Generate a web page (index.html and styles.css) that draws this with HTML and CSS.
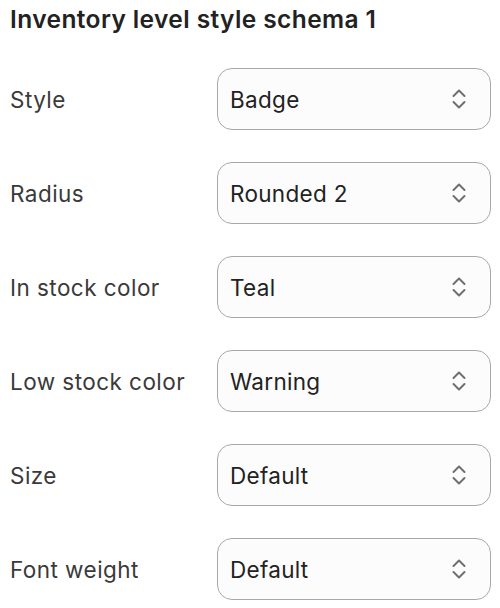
FILE: index.html
```html
<!DOCTYPE html>
<html>
<head>
<meta charset="utf-8">
<link rel="stylesheet" href="styles.css">
</head>
<body>
<div class="panel">
  <h1 class="title">Inventory level style schema 1</h1>
  <div class="rows">
    <div class="row"><span class="label">Style</span><div class="select"><span>Badge</span><svg class="chev" viewBox="0 0 14 24" width="14" height="24"><path d="M1.5 9 L7 3.5 L12.5 9 M1.5 15 L7 20.5 L12.5 15" fill="none" stroke="#6f6f6f" stroke-width="2" stroke-linecap="round" stroke-linejoin="round"/></svg></div></div>
    <div class="row"><span class="label">Radius</span><div class="select"><span>Rounded 2</span><svg class="chev" viewBox="0 0 14 24" width="14" height="24"><path d="M1.5 9 L7 3.5 L12.5 9 M1.5 15 L7 20.5 L12.5 15" fill="none" stroke="#6f6f6f" stroke-width="2" stroke-linecap="round" stroke-linejoin="round"/></svg></div></div>
    <div class="row"><span class="label">In stock color</span><div class="select"><span>Teal</span><svg class="chev" viewBox="0 0 14 24" width="14" height="24"><path d="M1.5 9 L7 3.5 L12.5 9 M1.5 15 L7 20.5 L12.5 15" fill="none" stroke="#6f6f6f" stroke-width="2" stroke-linecap="round" stroke-linejoin="round"/></svg></div></div>
    <div class="row"><span class="label">Low stock color</span><div class="select"><span>Warning</span><svg class="chev" viewBox="0 0 14 24" width="14" height="24"><path d="M1.5 9 L7 3.5 L12.5 9 M1.5 15 L7 20.5 L12.5 15" fill="none" stroke="#6f6f6f" stroke-width="2" stroke-linecap="round" stroke-linejoin="round"/></svg></div></div>
    <div class="row"><span class="label">Size</span><div class="select"><span>Default</span><svg class="chev" viewBox="0 0 14 24" width="14" height="24"><path d="M1.5 9 L7 3.5 L12.5 9 M1.5 15 L7 20.5 L12.5 15" fill="none" stroke="#6f6f6f" stroke-width="2" stroke-linecap="round" stroke-linejoin="round"/></svg></div></div>
    <div class="row"><span class="label">Font weight</span><div class="select"><span>Default</span><svg class="chev" viewBox="0 0 14 24" width="14" height="24"><path d="M1.5 9 L7 3.5 L12.5 9 M1.5 15 L7 20.5 L12.5 15" fill="none" stroke="#6f6f6f" stroke-width="2" stroke-linecap="round" stroke-linejoin="round"/></svg></div></div>
  </div>
</div>
</body>
</html>
```
FILE: styles.css
```css
html, body {
  margin: 0;
  padding: 0;
  background: #ffffff;
}
body {
  font-family: Inter, "Noto Sans", sans-serif;
  color: #222;
}
.panel {
  padding: 4px 9px 0 10px;
}
.title {
  margin: 0;
  font-size: 24.5px;
  font-weight: 600;
  line-height: 30px;
  color: #222;
  letter-spacing: 0.4px;
}
.rows {
  margin-top: 34px;
  display: flex;
  flex-direction: column;
  gap: 32px;
}
.row {
  display: flex;
  align-items: center;
  height: 62px;
}
.label {
  width: 207px;
  font-size: 22.5px;
  letter-spacing: 0.45px;
  color: #3a3a3a;
}
.select {
  flex: 1;
  height: 62px;
  box-sizing: border-box;
  border: 1.5px solid #a8a8a8;
  border-radius: 15px;
  background: #fcfcfc;
  display: flex;
  align-items: center;
  justify-content: space-between;
  padding: 0 24px 0 12px;
  font-size: 22.5px;
  letter-spacing: 0.3px;
  color: #222;
}
.chev {
  display: block;
}
```
